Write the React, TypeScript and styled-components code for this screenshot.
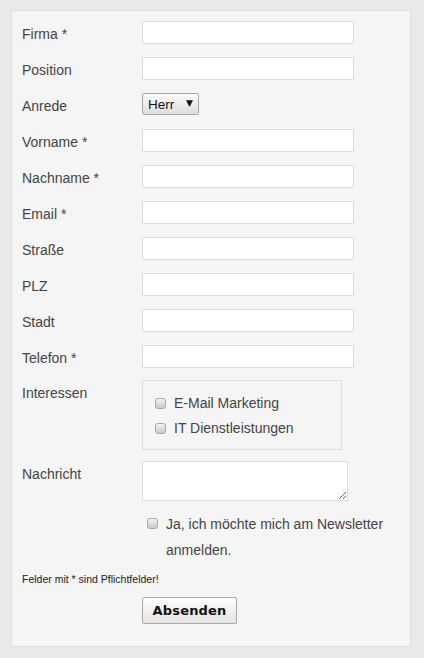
import React from "react";
import styled, { createGlobalStyle } from "styled-components";

const Global = createGlobalStyle`
  html, body { margin: 0; padding: 0; }
  body {
    background: #e9e9e9;
    font-family: "Liberation Sans", Arial, sans-serif;
    color: #444;
  }
`;

const Page = styled.div`
  padding: 10px 13px 12px 11px;
`;

const Panel = styled.form`
  background: #f5f5f5;
  border: 1px solid #dedede;
  padding: 10px 10px 22px 10px;
  width: 378px;
`;

const Row = styled.div<{ $gap?: number }>`
  display: grid;
  grid-template-columns: 120px 1fr;
  align-items: start;
  margin-bottom: ${(p) => (p.$gap ?? 13)}px;
`;

const Label = styled.label<{ $top?: number }>`
  box-sizing: border-box;
  height: 22px;
  font-size: 14px;
  line-height: 23px;
  padding-top: ${(p) => p.$top ?? 2}px;
  color: #444;
  white-space: nowrap;
`;

const TextInput = styled.input`
  box-sizing: border-box;
  width: 212px;
  height: 23px;
  border: 1px solid #dcdcdc;
  background: #fff;
  margin: 0;
  padding: 2px 4px;
  font: 13px "Liberation Sans", Arial, sans-serif;
  outline: none;
`;

const SelectWrap = styled.div`
  position: relative;
  width: 57px;
  height: 22px;
`;

const Select = styled.select`
  appearance: none;
  -webkit-appearance: none;
  box-sizing: border-box;
  width: 57px;
  height: 22px;
  margin: 0;
  padding: 0 0 0 5px;
  border: 1px solid #a6a6a6;
  border-radius: 2px;
  background: linear-gradient(#fbfbfb, #dedede);
  font: 13.5px "Liberation Sans", Arial, sans-serif;
  color: #111;
  outline: none;
  display: block;
`;

const Arrow = styled.span`
  position: absolute;
  right: 6px;
  top: 5px;
  font-size: 9px;
  line-height: 11px;
  color: #111;
  pointer-events: none;
  font-family: "DejaVu Sans", sans-serif;
`;

const Fieldset = styled.div`
  box-sizing: border-box;
  width: 200px;
  height: 70px;
  border: 1px solid #dcdcdc;
  padding: 10px 0 0 12px;
`;

const CheckLine = styled.label`
  display: flex;
  align-items: center;
  gap: 8px;
  font-size: 14px;
  line-height: 25px;
  color: #444;
`;

const Check = styled.input.attrs({ type: "checkbox" })`
  appearance: none;
  -webkit-appearance: none;
  box-sizing: border-box;
  width: 11px;
  height: 11px;
  margin: 0;
  border: 1px solid #a9a9a9;
  border-radius: 3px;
  background: linear-gradient(#f4f4f4, #c9c9c9);
  flex: none;
`;

const TextArea = styled.textarea`
  box-sizing: border-box;
  width: 206px;
  height: 40px;
  border: 1px solid #dcdcdc;
  background: #fff;
  margin: 0;
  padding: 2px 4px;
  font: 13px "Liberation Sans", Arial, sans-serif;
  outline: none;
  display: block;
`;

const Newsletter = styled.label`
  display: flex;
  align-items: flex-start;
  gap: 8px;
  padding-left: 5px;
  margin-top: 10px;
  font-size: 14px;
  line-height: 26px;
  color: #444;
  width: 240px;
  & > input {
    margin-top: 7px;
  }
`;

const Note = styled.p`
  margin: 9px 0 11px;
  font-size: 10.5px;
  line-height: 14px;
  color: #222;
`;

const Submit = styled.button`
  box-sizing: border-box;
  height: 27px;
  width: 95px;
  border: 1px solid #aaaaaa;
  border-radius: 2px;
  background: linear-gradient(#fdfdfd, #e4e4e4);
  font: bold 13px "DejaVu Sans", sans-serif;
  color: #111;
  letter-spacing: 0.2px;
  padding: 0;
`;

const fields = [
  "Firma *",
  "Position",
  "ANREDE",
  "Vorname *",
  "Nachname *",
  "Email *",
  "Straße",
  "PLZ",
  "Stadt",
  "Telefon *",
];

export default function App() {
  return (
    <Page>
      <Global />
      <Panel onSubmit={(e) => e.preventDefault()}>
        {fields.map((f, i) =>
          f === "ANREDE" ? (
            <Row key={f} $gap={14}>
              <Label $top={2}>Anrede</Label>
              <SelectWrap>
                <Select defaultValue="Herr">
                  <option>Herr</option>
                  <option>Frau</option>
                </Select>
                <Arrow>▼</Arrow>
              </SelectWrap>
            </Row>
          ) : (
            <Row key={f} $gap={i === fields.length - 1 ? 12 : 13}>
              <Label>{f}</Label>
              <TextInput type="text" />
            </Row>
          )
        )}
        <Row $gap={11}>
          <Label $top={2}>Interessen</Label>
          <Fieldset>
            <CheckLine>
              <Check />
              E-Mail Marketing
            </CheckLine>
            <CheckLine>
              <Check />
              IT Dienstleistungen
            </CheckLine>
          </Fieldset>
        </Row>
        <Row $gap={0}>
          <Label $top={2}>Nachricht</Label>
          <TextArea />
        </Row>
        <Row $gap={0}>
          <span />
          <Newsletter>
            <Check />
            <span>Ja, ich möchte mich am Newsletter anmelden.</span>
          </Newsletter>
        </Row>
        <Note>Felder mit * sind Pflichtfelder!</Note>
        <Row $gap={0}>
          <span />
          <div>
            <Submit type="submit">Absenden</Submit>
          </div>
        </Row>
      </Panel>
    </Page>
  );
}
